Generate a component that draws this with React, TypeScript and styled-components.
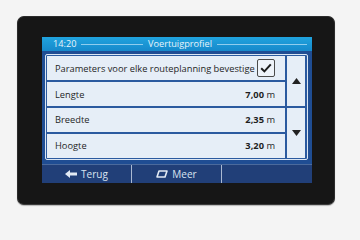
import styled, { createGlobalStyle } from 'styled-components';

const GlobalStyle = createGlobalStyle`
  html, body {
    margin: 0;
    padding: 0;
    background: #f4f4f4;
  }
  body {
    font-family: 'Open Sans', 'Noto Sans', sans-serif;
  }
`;

const Page = styled.div`
  width: 360px;
  height: 240px;
  padding: 16px 0 0 17px;
  box-sizing: border-box;
`;

const Bezel = styled.div`
  width: 318px;
  height: 189px;
  box-sizing: border-box;
  padding: 20px 22px 21px 24px;
  background: #161616;
  border-radius: 7px;
  border: 1px solid #2b2b2b;
  border-bottom-color: #3a3a3a;
  box-shadow: 0 1px 1px rgba(0, 0, 0, 0.25);
`;

const Screen = styled.div`
  width: 270px;
  height: 146px;
  display: flex;
  flex-direction: column;
  background: #1f4d93;
`;

const Header = styled.div`
  height: 14px;
  flex: none;
  display: grid;
  grid-template-columns: 1fr auto 1fr;
  align-items: center;
  gap: 5px;
  padding: 0 5px 0 11px;
  background: linear-gradient(#20a3de, #1689cb);
  color: #e8f4fb;
  font-size: 9.2px;
  line-height: 14px;
`;

const HeaderSide = styled.div`
  display: flex;
  align-items: center;
  gap: 5px;
`;

const Rule = styled.div`
  flex: 1;
  height: 1px;
  background: #8fcdee;
`;

const Middle = styled.div`
  flex: 1;
  padding: 3px 4px 4px 3px;
  display: flex;
`;

const Panel = styled.div`
  flex: 1;
  display: grid;
  grid-template-columns: 1fr 18px;
  gap: 2px;
  padding: 1px 2px 1px 1px;
  border: 1px solid #dbe6f3;
  border-radius: 2px;
  background: #2b5a9f;
`;

const List = styled.div`
  display: grid;
  grid-template-rows: repeat(4, 1fr);
  gap: 1.5px;
`;

const Row = styled.div`
  display: flex;
  align-items: center;
  justify-content: space-between;
  gap: 2px;
  padding: 0 10px 0 8px;
  background: #e6eef7;
  color: #1f1f1f;
  font-size: 9.3px;
  white-space: nowrap;
`;

const Label = styled.span`
  flex: 1;
`;

const Value = styled.span`
  b {
    font-weight: 700;
  }
`;

const CheckBox = styled.div`
  width: 16px;
  height: 16px;
  flex: none;
  border: 1px solid #4a4a4a;
  border-radius: 2px;
  background: #eef3f9;
  display: flex;
  align-items: center;
  justify-content: center;
`;

const Scroll = styled.div`
  display: grid;
  grid-template-rows: 1fr 1fr;
  gap: 1.5px;
`;

const ScrollButton = styled.div`
  background: #e6eef7;
  display: flex;
  justify-content: center;
  align-items: center;
`;

const Bottom = styled.div`
  height: 19px;
  flex: none;
  display: grid;
  grid-template-columns: 90px 1fr 90px;
  background: #213f78;
  border-top: 1px solid #4b6a9c;
  box-sizing: border-box;
`;

const BottomButton = styled.div<{ $divider?: boolean }>`
  display: flex;
  align-items: center;
  justify-content: center;
  gap: 4px;
  color: #d9e3f0;
  font-size: 10px;
  border-right: ${(p) => (p.$divider ? '1px solid #aab9d2' : 'none')};
`;

const App = () => {
  return (
    <Page>
      <GlobalStyle />
      <Bezel>
        <Screen>
          <Header>
            <HeaderSide>
              <span>14:20</span>
              <Rule />
            </HeaderSide>
            <span>Voertuigprofiel</span>
            <HeaderSide>
              <Rule />
            </HeaderSide>
          </Header>
          <Middle>
            <Panel>
              <List>
                <Row>
                  <Label>Parameters voor elke routeplanning bevestige</Label>
                  <CheckBox>
                    <svg width="12" height="10" viewBox="0 0 12 10">
                      <path d="M1.2 5.2 L4.4 8.4 L10.8 1.4" fill="none" stroke="#1c1c1c" strokeWidth="2" />
                    </svg>
                  </CheckBox>
                </Row>
                <Row>
                  <Label>Lengte</Label>
                  <Value>
                    <b>7,00</b> m
                  </Value>
                </Row>
                <Row>
                  <Label>Breedte</Label>
                  <Value>
                    <b>2,35</b> m
                  </Value>
                </Row>
                <Row>
                  <Label>Hoogte</Label>
                  <Value>
                    <b>3,20</b> m
                  </Value>
                </Row>
              </List>
              <Scroll>
                <ScrollButton>
                  <svg width="9" height="6" viewBox="0 0 9 6">
                    <path d="M4.5 0 L9 6 L0 6 Z" fill="#222" />
                  </svg>
                </ScrollButton>
                <ScrollButton>
                  <svg width="9" height="6" viewBox="0 0 9 6">
                    <path d="M0 0 L9 0 L4.5 6 Z" fill="#222" />
                  </svg>
                </ScrollButton>
              </Scroll>
            </Panel>
          </Middle>
          <Bottom>
            <BottomButton $divider>
              <svg width="12" height="8" viewBox="0 0 12 8">
                <path d="M0 4 L5 0 L5 2.5 L12 2.5 L12 5.5 L5 5.5 L5 8 Z" fill="#e2eaf4" />
              </svg>
              <span>Terug</span>
            </BottomButton>
            <BottomButton $divider>
              <svg width="12" height="8" viewBox="0 0 12 8">
                <path d="M3 1 L11 1 L9 7 L1 7 Z" fill="none" stroke="#e2eaf4" strokeWidth="1.6" strokeLinejoin="round" />
              </svg>
              <span>Meer</span>
            </BottomButton>
            <BottomButton />
          </Bottom>
        </Screen>
      </Bezel>
    </Page>
  );
};

export default App;
